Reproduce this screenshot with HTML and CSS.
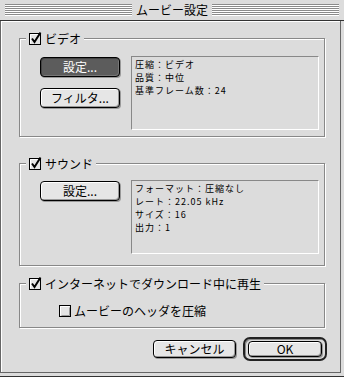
FILE: index.html
```html
<!DOCTYPE html>
<html lang="ja">
  <head>
    <meta charset="UTF-8" />
    <title>ムービー設定</title>
    <link rel="stylesheet" href="styles.css">
  </head>
  <body>
    <div class="window">
      <!-- Title bar -->
      <div class="titlebar">
        <div class="stripes"></div>
        <div class="title">ムービー設定</div>
        <div class="stripes"></div>
      </div>

      <div class="dialog">
        <!-- Video -->
        <fieldset class="group group-video">
          <legend>
            <span class="legend-inner">
              <svg class="cb" width="13" height="13" viewBox="0 0 13 13">
                <rect x="0.5" y="1.5" width="11" height="11" fill="#e4e4e4" stroke="#000" />
                <path d="M1.5 2.5 H10.5 M1.5 2.5 V11.5" stroke="#fff" fill="none" />
                <path d="M3 6.5 L5.5 10 L11.5 0.5" stroke="#000" stroke-width="2" fill="none" />
              </svg>
              ビデオ
            </span>
          </legend>
          <div class="group-body">
            <div class="btn-col">
              <button class="btn btn-active">設定...</button>
              <button class="btn">フィルタ...</button>
            </div>
            <div class="info">
              <div>圧縮：ビデオ</div>
              <div>品質：中位</div>
              <div>基準フレーム数：24</div>
            </div>
          </div>
        </fieldset>

        <!-- Sound -->
        <fieldset class="group group-sound">
          <legend>
            <span class="legend-inner">
              <svg class="cb" width="13" height="13" viewBox="0 0 13 13">
                <rect x="0.5" y="1.5" width="11" height="11" fill="#e4e4e4" stroke="#000" />
                <path d="M1.5 2.5 H10.5 M1.5 2.5 V11.5" stroke="#fff" fill="none" />
                <path d="M3 6.5 L5.5 10 L11.5 0.5" stroke="#000" stroke-width="2" fill="none" />
              </svg>
              サウンド
            </span>
          </legend>
          <div class="group-body">
            <div class="btn-col">
              <button class="btn">設定...</button>
            </div>
            <div class="info">
              <div>フォーマット：圧縮なし</div>
              <div>レート：22.05 kHz</div>
              <div>サイズ：16</div>
              <div>出力：1</div>
            </div>
          </div>
        </fieldset>

        <!-- Fast start -->
        <fieldset class="group group-net">
          <legend>
            <span class="legend-inner">
              <svg class="cb" width="13" height="13" viewBox="0 0 13 13">
                <rect x="0.5" y="1.5" width="11" height="11" fill="#e4e4e4" stroke="#000" />
                <path d="M1.5 2.5 H10.5 M1.5 2.5 V11.5" stroke="#fff" fill="none" />
                <path d="M3 6.5 L5.5 10 L11.5 0.5" stroke="#000" stroke-width="2" fill="none" />
              </svg>
              インターネットでダウンロード中に再生
            </span>
          </legend>
          <div class="sub-option">
            <svg class="cb" width="13" height="13" viewBox="0 0 13 13">
              <rect x="0.5" y="1.5" width="11" height="11" fill="#e4e4e4" stroke="#000" />
              <path d="M1.5 2.5 H10.5 M1.5 2.5 V11.5" stroke="#fff" fill="none" />
              <path d="M10.5 3.5 V11.5 H2.5" stroke="#999" fill="none" />
            </svg>
            ムービーのヘッダを圧縮
          </div>
        </fieldset>

        <div class="actions">
          <button class="btn btn-cancel">キャンセル</button>
          <div class="default-ring">
            <button class="btn btn-ok">OK</button>
          </div>
        </div>
      </div>
    </div>
  </body>
</html>
```

FILE: styles.css
```css
* {
  box-sizing: border-box;
}
html,
body {
  margin: 0;
  height: 100%;
}
body {
  background: #dcdcdc;
  font-family: "Noto Sans CJK JP", sans-serif;
  font-size: 12px;
  color: #000;
}
.window {
  width: 344px;
  height: 377px;
  display: flex;
  flex-direction: column;
  border-bottom: 1px solid #333;
}
.titlebar {
  height: 21px;
  display: flex;
  align-items: flex-start;
  gap: 4px;
  padding: 0 5px;
  border-bottom: 1px solid #333;
}
.stripes {
  flex: 1;
  height: 12px;
  margin-top: 4px;
  background: repeating-linear-gradient(to bottom, #8a8a8a 0 1px, #fff 1px 2px);
}
.title {
  height: 20px;
  line-height: 20px;
}
.dialog {
  flex: 1;
  margin: 0 3px 3px 0;
  border: 1px solid #666;
  border-top: none;
  box-shadow: inset 1px 1px #fff;
  padding: 11px 15px 0 18px;
  display: flex;
  flex-direction: column;
}

/* group boxes */
.group {
  margin: 0;
  padding: 0;
  min-width: 0;
  border: 1px solid #888;
  box-shadow: inset 1px 1px #fff, 1px 1px #fff;
}
.group legend {
  margin-left: 6px;
  padding: 0 3px;
  height: 13px;
  line-height: 13px;
  background: #dcdcdc;
}
.legend-inner {
  display: flex;
  align-items: center;
  gap: 3px;
  height: 13px;
}
.cb {
  display: block;
  overflow: visible;
  flex: none;
}
.group-sound {
  margin-top: 20px;
}
.group-net {
  margin-top: 11px;
}
.group-body {
  display: flex;
  align-items: flex-start;
  gap: 11px;
  padding: 11px 5px 6px 20px;
}
.group-sound .group-body {
  padding-top: 10px;
  padding-bottom: 11px;
}
.btn-col {
  width: 80px;
  margin-top: 1px;
  display: flex;
  flex-direction: column;
  gap: 11px;
}
.info {
  width: 188px;
  height: 74px;
  border: 1px solid;
  border-color: #888 #fff #fff #888;
  padding: 1px 3px;
  font-size: 9px;
  line-height: 13px;
  letter-spacing: 1px;
  white-space: nowrap;
}
.sub-option {
  display: flex;
  align-items: center;
  gap: 2px;
  height: 14px;
  margin: 13px 0 10px 39px;
}

/* push buttons */
.btn {
  height: 20px;
  padding: 0;
  font: inherit;
  font-size: 12px;
  line-height: 18px;
  color: #000;
  background: #e6e6e6;
  border: 1px solid #000;
  border-radius: 4px;
  box-shadow: inset 1px 1px #fff, inset -1px -1px #999, 1px 1px #999;
}
.btn-active {
  background: #5c5c5c;
  color: #fff;
  box-shadow: inset 1px 1px #444, inset -1px -1px #777, 1px 1px #999;
}
.actions {
  display: flex;
  justify-content: flex-end;
  align-items: center;
  gap: 7px;
  margin: 9px -2px 0 0;
}
.btn-cancel {
  width: 83px;
  height: 18px;
  line-height: 16px;
}
.default-ring {
  width: 84px;
  height: 24px;
  padding: 2px 3px;
  border: 2px solid #222;
  border-radius: 7px;
  box-shadow: inset 1px 1px #888;
}
.btn-ok {
  display: block;
  width: 100%;
  height: 16px;
  line-height: 14px;
}
```
